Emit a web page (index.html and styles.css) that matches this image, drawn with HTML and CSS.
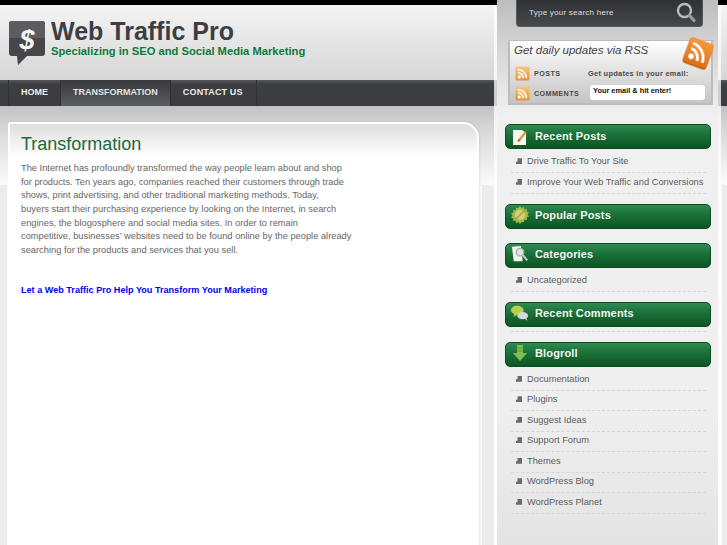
FILE: index.html

```html
<!DOCTYPE html>
<html lang="en">
<head>
    <meta charset="UTF-8">
    <meta name="viewport" content="width=device-width, initial-scale=1.0">
    <title>Web Traffic Pro</title>
    <link rel="stylesheet" href="styles.css">
</head>
<body>

<svg class="defs" width="0" height="0">
    <defs>
        <linearGradient id="rss-grad" x1="0" y1="0" x2="0" y2="1">
            <stop offset="0" stop-color="#f8c878"/>
            <stop offset="1" stop-color="#ee9030"/>
        </linearGradient>
        <linearGradient id="rss-grad-big" x1="0" y1="0" x2="0" y2="1">
            <stop offset="0" stop-color="#f09a3c"/>
            <stop offset="1" stop-color="#df6f16"/>
        </linearGradient>
        <symbol id="rss" viewBox="0 0 16 16">
            <rect x="0.5" y="0.5" width="15" height="15" rx="2" fill="url(#rss-grad)"/>
            <circle cx="4.6" cy="11.6" r="1.7" fill="#fff"/>
            <path d="M3 7.2a5.8 5.8 0 0 1 5.8 5.8M3 3.9a9.1 9.1 0 0 1 9.1 9.1" fill="none" stroke="#fff" stroke-width="1.7"/>
        </symbol>
        <symbol id="rss-large" viewBox="0 0 16 16">
            <rect x="0.5" y="0.5" width="15" height="15" rx="2" fill="url(#rss-grad-big)"/>
            <circle cx="4.6" cy="11.6" r="1.7" fill="#fff"/>
            <path d="M3 7.2a5.8 5.8 0 0 1 5.8 5.8M3 3.9a9.1 9.1 0 0 1 9.1 9.1" fill="none" stroke="#fff" stroke-width="1.7"/>
        </symbol>
    </defs>
</svg>

<div class="page">
    <div class="main">
        <header class="header">
            <svg class="logo" width="36" height="45" viewBox="0 0 36 45">
                <path d="M3 0H33a3 3 0 0 1 3 3V32a3 3 0 0 1-3 3H18L9 44 8 35H3a3 3 0 0 1-3-3V3a3 3 0 0 1 3-3Z" fill="#45474a"/>
                <path d="M3 0H33a3 3 0 0 1 3 3V17H0V3a3 3 0 0 1 3-3Z" fill="#5a5c5f"/>
                <text x="18" y="28" text-anchor="middle" class="logo-dollar">$</text>
            </svg>
            <div class="brand">
                <div class="site-title">Web Traffic Pro</div>
                <div class="tagline">Specializing in SEO and Social Media Marketing</div>
            </div>
        </header>

        <nav class="nav">
            <a class="nav-item" href="#">HOME</a>
            <a class="nav-item active" href="#">TRANSFORMATION</a>
            <a class="nav-item nav-last" href="#">CONTACT US</a>
        </nav>

        <div class="card">
            <h1>Transformation</h1>
            <p>The Internet has profoundly transformed the way people learn about and shop<br>
            for products. Ten years ago, companies reached their customers through trade<br>
            shows, print advertising, and other traditional marketing methods. Today,<br>
            buyers start their purchasing experience by looking on the Internet, in search<br>
            engines, the blogosphere and social media sites. In order to remain<br>
            competitive, businesses’ websites need to be found online by the people already<br>
            searching for the products and services that you sell.</p>
            <a class="cta" href="#">Let a Web Traffic Pro Help You Transform Your Marketing</a>
        </div>
    </div>

    <div class="side-wrap">
        <aside class="sidebar">
            <div class="search">
                <span>Type your search here</span>
                <svg width="20" height="21" viewBox="0 0 20 21">
                    <circle cx="8.5" cy="8.5" r="6.5" fill="none" stroke="#b9bcbe" stroke-width="2.4"/>
                    <path d="M13.5 13.5 18 18.5" stroke="#9a9d9f" stroke-width="3.2" stroke-linecap="round"/>
                </svg>
            </div>

            <div class="rss-box">
                <svg class="rss-big" width="27" height="27" viewBox="0 0 16 16"><use href="#rss-large"/></svg>
                <div class="rss-title">Get daily updates via RSS</div>
                <div class="rss-body">
                    <div class="rss-links">
                        <a href="#"><svg width="15" height="15"><use href="#rss"/></svg>POSTS</a>
                        <a href="#"><svg width="15" height="15"><use href="#rss"/></svg>COMMENTS</a>
                    </div>
                    <div class="rss-mail">
                        <div class="mail-label">Get updates in your email:</div>
                        <div class="mail-input">Your email &amp; hit enter!</div>
                    </div>
                </div>
            </div>

            <section class="widget">
                <h3>
                    <svg width="18" height="18" viewBox="0 0 18 18">
                        <path d="M2 3H11L15 6V18H2Z" fill="#f6f6f2"/>
                        <path d="M14 4 7.500 12 6.500 15 9.500 13.500 15.500 6Z" fill="#d9a23a"/>
                        <path d="M6.500 15 7.500 12 9.500 13.500Z" fill="#c0392b"/>
                    </svg>
                    Recent Posts
                </h3>
                <ul>
                    <li><a href="#">Drive Traffic To Your Site</a></li>
                    <li><a href="#">Improve Your Web Traffic and Conversions</a></li>
                </ul>
            </section>

            <section class="widget widget-empty">
                <h3>
                    <svg width="18" height="18" viewBox="0 0 18 18">
                        <path d="M9 0l1.600 2 2.200-1.200.6 2.400 2.500-.2-.2 2.500 2.300 1-1.500 2 1.500 2-2.300 1 .2 2.500-2.500-.2-.6 2.400L10.600 16 9 18l-1.600-2-2.200 1.200-.6-2.400-2.500.2.200-2.500L0 11.500l1.500-2L0 7.500l2.300-1-.2-2.500 2.500.2.600-2.400L7.400 2Z" fill="#9bbb4a"/>
                        <circle cx="9" cy="9" r="5" fill="#c9d77a"/>
                        <path d="M5 13 14 4" stroke="#d98a3a" stroke-width="1.600"/>
                    </svg>
                    Popular Posts
                </h3>
            </section>

            <section class="widget">
                <h3>
                    <svg width="20" height="20" viewBox="0 0 20 20">
                        <path d="M1 2 11 1 13 18 3 18Z" fill="#f2f2ee"/>
                        <circle cx="10" cy="8" r="4.200" fill="#dfe3e0" stroke="#a9aeaa" stroke-width="1.500"/>
                        <path d="M13 11 18 17" stroke="#cfcfcf" stroke-width="2.200"/>
                    </svg>
                    Categories
                </h3>
                <ul>
                    <li><a href="#">Uncategorized</a></li>
                </ul>
            </section>

            <section class="widget widget-rule">
                <h3>
                    <svg width="20" height="18" viewBox="0 0 20 18">
                        <path d="M7 1c4 0 7 2 7 5s-3 5-7 5L3 13.500 3.500 10C1.500 9 0 8 0 6c0-3 3-5 7-5Z" fill="#b6d04c"/>
                        <ellipse cx="13" cy="12" rx="6" ry="4" fill="#d8d9d4"/>
                        <path d="M15 15 18 17.500 17 14Z" fill="#d8d9d4"/>
                    </svg>
                    Recent Comments
                </h3>
            </section>

            <section class="widget">
                <h3>
                    <svg width="18" height="18" viewBox="0 0 18 18">
                        <path d="M6 1H12V9H16L9 17 2 9H6Z" fill="#7fbf50"/>
                        <path d="M6 4H12M6 7H12" stroke="#4d9a3a" stroke-width="1"/>
                    </svg>
                    Blogroll
                </h3>
                <ul>
                    <li><a href="#">Documentation</a></li>
                    <li><a href="#">Plugins</a></li>
                    <li><a href="#">Suggest Ideas</a></li>
                    <li><a href="#">Support Forum</a></li>
                    <li><a href="#">Themes</a></li>
                    <li><a href="#">WordPress Blog</a></li>
                    <li><a href="#">WordPress Planet</a></li>
                </ul>
            </section>
        </aside>
    </div>
</div>

</body>
</html>
```

FILE: styles.css

```css
/* Page frame */
html, body {
    margin: 0;
    padding: 0;
}

body {
    font-family: "Liberation Sans", Arial, sans-serif;
    background: #f5f5f5;
}

a {
    text-decoration: none;
}

.defs {
    display: block;
    height: 0;
}

.page {
    display: flex;
    width: 727px;
    height: 545px;
    overflow: hidden;
    background:
        linear-gradient(#ececec, #ececec) 0 185px / 7px 100% no-repeat,
        linear-gradient(#ececec, #ececec) 482px 185px / 12px 100% no-repeat,
        linear-gradient(#ececec, #ececec) 722px 185px / 5px 100% no-repeat,
        linear-gradient(to bottom,
            #000 0 5px,
            #f4f4f4 5px,
            #d6d6d6 80px,
            #55575a 80px,
            #3c3e41 84px,
            #3a3c3f 106px,
            #c2c2c2 106px,
            #dcdcdc 135px,
            #fbfbfb 185px,
            #fbfbfb 100%);
}

.main {
    width: 494px;
    flex: none;
}

/* Header */
.header {
    height: 75px;
    box-sizing: border-box;
    padding: 14px 0 0 9px;
    display: flex;
    gap: 6px;
    margin-top: 5px;
}

.logo {
    margin-top: 2px;
    flex: none;
}

.logo-dollar {
    font-size: 27px;
    font-weight: bold;
    font-style: italic;
    fill: #f4f4f4;
}

.site-title {
    font-size: 25px;
    font-weight: bold;
    line-height: 24px;
    color: #3c3e41;
}

.tagline {
    font-size: 11.2px;
    font-weight: bold;
    line-height: 14px;
    margin-top: 1px;
    color: #0e7a38;
}

/* Nav */
.nav {
    display: flex;
    height: 26px;
    padding-left: 8px;
}

.nav-item {
    padding: 0 12px;
    font-size: 9px;
    font-weight: bold;
    line-height: 25px;
    color: #ececec;
    border-left: 1px solid #2f3133;
}

.nav-last {
    padding-right: 13px;
    letter-spacing: 0.15px;
    border-right: 1px solid #2f3133;
}

.nav-item.active {
    background: linear-gradient(to bottom, #37393c, #5b5e61);
    color: #e4e4e4;
}

/* Content card */
.card {
    width: 471px;
    height: 440px;
    box-sizing: border-box;
    margin: 16px 0 0 8px;
    padding: 10px 11px;
    border: 2px solid #fff;
    border-bottom: none;
    border-radius: 3px 16px 0 0;
    background: linear-gradient(to bottom, #dedede, #fff 32px);
    box-shadow: 1px 0 2px rgba(0, 0, 0, 0.08);
}

h1 {
    font-size: 18px;
    font-weight: normal;
    line-height: 20px;
    margin: 0 0 8px;
    color: #1d6b3b;
}

.card p {
    font-size: 9.3px;
    line-height: 13.65px;
    margin: 0 0 21px;
    color: #666;
}

.cta {
    font-size: 9.1px;
    font-weight: bold;
    color: #0000ee;
}

/* Sidebar */
.side-wrap {
    width: 221px;
    height: 540px;
    flex: none;
    margin-top: 5px;
    padding: 0 3px;
    background: rgba(255, 255, 255, 0.75);
}

.sidebar {
    width: 221px;
    height: 545px;
    margin-top: -5px;
    background: linear-gradient(to bottom, #bdbdbd, #d6d6d6 50px, #f0f0f0 115px, #efefef 400px, #e4e4e4 100%);
}

.search {
    width: 187px;
    height: 27px;
    box-sizing: border-box;
    margin-left: 19px;
    padding: 0 6px 1px 12px;
    display: flex;
    align-items: center;
    justify-content: space-between;
    background: linear-gradient(to bottom, #2f3134, #46494c);
    border: 1px solid #55585b;
    border-top: none;
    border-radius: 0 0 4px 4px;
    font-size: 8.1px;
    letter-spacing: 0.2px;
    color: #dedede;
}

.rss-box {
    position: relative;
    width: 205px;
    height: 65px;
    box-sizing: border-box;
    margin: 13px 0 0 11px;
    padding: 2px 4px;
    border: 2px solid #bcbcbc;
    border-top-width: 1px;
    background: linear-gradient(to bottom, #fff, #f1f1f1 14px, #c4c4c4 100%);
}

.rss-big {
    position: absolute;
    right: -1px;
    top: -2px;
    transform: rotate(20deg);
    filter: drop-shadow(0 2px 0 #c9650f);
}

.rss-title {
    font-size: 11.5px;
    font-style: italic;
    line-height: 15px;
    color: #444;
}

.rss-body {
    display: flex;
    margin-top: 5px;
}

.rss-links {
    width: 73px;
    margin-left: 1px;
    flex: none;
}

.rss-links a {
    display: flex;
    align-items: center;
    gap: 4px;
    height: 20px;
    font-size: 7.2px;
    font-weight: bold;
    letter-spacing: 0.4px;
    line-height: 15px;
    color: #4a4a4a;
}

.rss-links svg {
    flex: none;
}

.mail-label {
    font-size: 7.4px;
    font-weight: bold;
    letter-spacing: 0.3px;
    line-height: 10px;
    margin-top: 6px;
    color: #4a4a4a;
}

.mail-input {
    width: 115px;
    height: 15px;
    box-sizing: border-box;
    margin: 6px 0 0 2px;
    padding: 1px 3px;
    border-radius: 3px;
    background: #fff;
    font-size: 7.4px;
    font-weight: bold;
    line-height: 9px;
    color: #111;
}

.widget {
    width: 206px;
    margin: 0 0 0 8px;
}

.rss-box + .widget {
    margin-top: 19px;
}

.widget h3 {
    display: flex;
    align-items: center;
    height: 25px;
    box-sizing: border-box;
    margin: 0;
    padding: 0 0 2px 5px;
    gap: 6px;
    border-radius: 5px;
    border: 1px solid #0c4a1e;
    background: linear-gradient(to bottom, #2d8a50, #1a6f38 45%, #0c5523);
    font-size: 11px;
    font-weight: bold;
    letter-spacing: 0.15px;
    color: #f2f7f2;
}

.widget h3 svg {
    flex: none;
    width: 18px;
}

.widget ul {
    list-style: none;
    margin: 0 0 10px;
    padding: 3.5px 5px 0 6px;
}

.widget li {
    height: 20.5px;
    box-sizing: border-box;
    display: flex;
    align-items: center;
    border-bottom: 1px dashed #d6d6d6;
    padding: 0 0 2px 5px;
    gap: 5px;
    font-size: 9.3px;
    white-space: nowrap;
}

.widget li::before {
    content: "";
    width: 6px;
    height: 6px;
    flex: none;
    background: #6a6a6a;
    clip-path: polygon(25% 0, 100% 0, 100% 100%, 0 100%, 0 60%, 25% 60%);
}

.widget li a {
    color: #5c5c5c;
}

.widget-empty {
    padding-bottom: 14px;
}

.widget-rule::after {
    content: "";
    display: block;
    margin: 4px 5px 10px 6px;
    border-bottom: 1px dashed #d6d6d6;
}
```
